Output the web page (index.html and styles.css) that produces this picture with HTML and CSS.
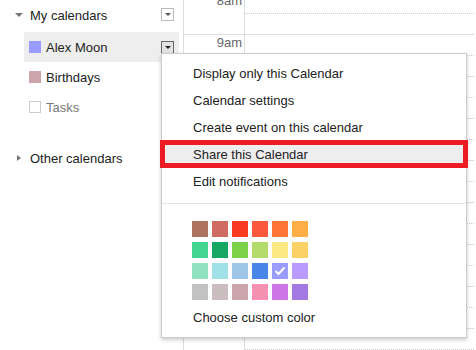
FILE: index.html
```html
<!DOCTYPE html>
<html lang="en">
<head>
    <meta charset="UTF-8">
    <meta name="viewport" content="width=device-width, initial-scale=1.0">
    <title>Calendar - calendar menu</title>
    <link rel="stylesheet" href="styles.css">
</head>
<body>

    <div class="app">
        <aside class="sidebar">
            <div class="section-head">
                <span class="caret-down"></span>
                <span class="section-title">My calendars</span>
                <span class="dd"></span>
            </div>
            <ul class="cal-list">
                <li class="cal active">
                    <span class="swatch" style="background:#9a9cff;"></span>
                    <span class="cal-name">Alex Moon</span>
                    <span class="dd open"></span>
                </li>
                <li class="cal">
                    <span class="swatch" style="background:#cca6ac;"></span>
                    <span class="cal-name">Birthdays</span>
                </li>
                <li class="cal muted">
                    <span class="swatch empty"></span>
                    <span class="cal-name">Tasks</span>
                </li>
            </ul>
            <div class="section-head other">
                <span class="caret-right"></span>
                <span class="section-title">Other calendars</span>
            </div>
        </aside>

        <div class="timecol">
            <div class="hour"><span>8am</span></div>
            <div class="hour"><span>9am</span></div>
            <div class="hour"><span>10am</span></div>
            <div class="hour"><span>11am</span></div>
            <div class="hour"><span>12pm</span></div>
            <div class="hour"><span>1pm</span></div>
            <div class="hour"><span>2pm</span></div>
            <div class="hour"><span>3pm</span></div>
            <div class="hour"></div>
        </div>

        <div class="daycol">
            <div class="slot"><div class="half"></div><div class="half"></div></div>
            <div class="slot"><div class="half"></div><div class="half"></div></div>
            <div class="slot"><div class="half"></div><div class="half"></div></div>
            <div class="slot"><div class="half"></div><div class="half"></div></div>
            <div class="slot"><div class="half"></div><div class="half"></div></div>
            <div class="slot"><div class="half"></div><div class="half"></div></div>
            <div class="slot"><div class="half"></div><div class="half"></div></div>
            <div class="slot"><div class="half"></div><div class="half"></div></div>
            <div class="slot"><div class="half"></div><div class="half"></div></div>
        </div>
    </div>

    <!-- menu opened from the Alex Moon dropdown -->
    <div class="menu">
        <div class="item">Display only this Calendar</div>
        <div class="item">Calendar settings</div>
        <div class="item">Create event on this calendar</div>
        <div class="item hover">Share this Calendar</div>
        <div class="item">Edit notifications</div>
        <div class="sep"></div>
        <div class="palette">
            <span class="chip" style="background:#ac725e;"></span>
            <span class="chip" style="background:#d06b64;"></span>
            <span class="chip" style="background:#f83a22;"></span>
            <span class="chip" style="background:#fa573c;"></span>
            <span class="chip" style="background:#ff7537;"></span>
            <span class="chip" style="background:#ffad46;"></span>
            <span class="chip" style="background:#42d692;"></span>
            <span class="chip" style="background:#16a765;"></span>
            <span class="chip" style="background:#7bd148;"></span>
            <span class="chip" style="background:#b3dc6c;"></span>
            <span class="chip" style="background:#fbe983;"></span>
            <span class="chip" style="background:#fad165;"></span>
            <span class="chip" style="background:#92e1c0;"></span>
            <span class="chip" style="background:#9fe1e7;"></span>
            <span class="chip" style="background:#9fc6e7;"></span>
            <span class="chip" style="background:#4986e7;"></span>
            <span class="chip" style="background:#9a9cff;">
                <svg width="16" height="16" viewBox="0 0 16 16"><path d="M3.5 8 L6.5 11 L12.5 4.5" fill="none" stroke="#fff" stroke-width="2"/></svg>
            </span>
            <span class="chip" style="background:#b99aff;"></span>
            <span class="chip" style="background:#c2c2c2;"></span>
            <span class="chip" style="background:#cabdbf;"></span>
            <span class="chip" style="background:#cca6ac;"></span>
            <span class="chip" style="background:#f691b2;"></span>
            <span class="chip" style="background:#cd74e6;"></span>
            <span class="chip" style="background:#a47ae2;"></span>
        </div>
        <div class="item custom">Choose custom color</div>
    </div>

</body>
</html>
```

FILE: styles.css
```css
html, body { margin: 0; height: 100%; overflow: hidden; }
body { font-family: "Liberation Sans", Arial, sans-serif; font-size: 13px; color: #222; background: #fff; }

.app { display: flex; height: 100%; }

/* sidebar */
.sidebar { width: 183px; flex: none; }
.section-head { display: flex; align-items: center; height: 30px; padding-left: 15px; }
.caret-down { width: 0; height: 0; border-left: 4px solid transparent; border-right: 4px solid transparent; border-top: 4px solid #777; margin-right: 7px; }
.caret-right { width: 0; height: 0; border-top: 3px solid transparent; border-bottom: 3px solid transparent; border-left: 4px solid #777; margin-right: 9px; }
.section-head.other { margin-top: 21px; padding-left: 17px; }
.section-head .dd { margin-left: auto; margin-right: 9px; margin-top: -1px; }

.dd { position: relative; width: 13px; height: 13px; box-sizing: border-box; border: 1px solid #bbb; background: #fff; flex: none; }
.dd::after { content: ""; position: absolute; left: 3px; top: 4px; border-left: 3px solid transparent; border-right: 3px solid transparent; border-top: 3px solid #555; }
.dd.open { border-color: #666; background: #e3e3e3; }
.dd.open::after { border-top-color: #222; }

.cal-list { list-style: none; margin: 2px 4px 0 24px; padding: 0; }
.cal { display: flex; align-items: center; height: 30px; padding: 0 5px; }
.cal.active { background: #eee; }
.cal .dd { margin-left: auto; }
.swatch { width: 12px; height: 12px; box-sizing: border-box; margin-right: 5px; flex: none; }
.swatch.empty { border: 1px solid #ccc; background: #fff; }
.cal.muted .cal-name { color: #777; }

/* time grid */
.timecol { width: 60px; flex: none; border-left: 1px solid #ddd; border-right: 1px solid #ddd; margin-top: -7px; }
.hour { height: 42px; box-sizing: border-box; border-bottom: 1px solid #ddd; text-align: right; padding: 1px 2px 0 0; color: #666; line-height: 13px; }
.daycol { flex: 1; margin-right: 2px; margin-top: -7px; }
.half { height: 21px; box-sizing: border-box; border-bottom: 1px dotted #ccc; }
.half + .half { border-bottom: 1px solid #ddd; }

/* dropdown menu */
.menu { position: absolute; left: 161px; top: 53px; width: 306px; box-sizing: border-box; background: #fff; border: 1px solid #ccc; box-shadow: 0 2px 4px rgba(0, 0, 0, 0.2); padding: 6px 0; }
.item { height: 27px; line-height: 27px; padding-left: 31px; }
.item.hover { position: relative; background: #eee; }
.item.hover::after { content: ""; position: absolute; top: -1px; bottom: 0; left: -2px; right: -2px; border: 5px solid #ed1c24; }
.sep { height: 1px; background: #e5e5e5; margin-top: 8px; }
.palette { display: grid; grid-template-columns: repeat(6, 16px); column-gap: 4px; row-gap: 5px; padding-left: 30px; margin-top: 17px; }
.chip { width: 16px; height: 16px; display: block; }
.chip svg { display: block; }
.item.custom { margin-top: 4px; }
```
